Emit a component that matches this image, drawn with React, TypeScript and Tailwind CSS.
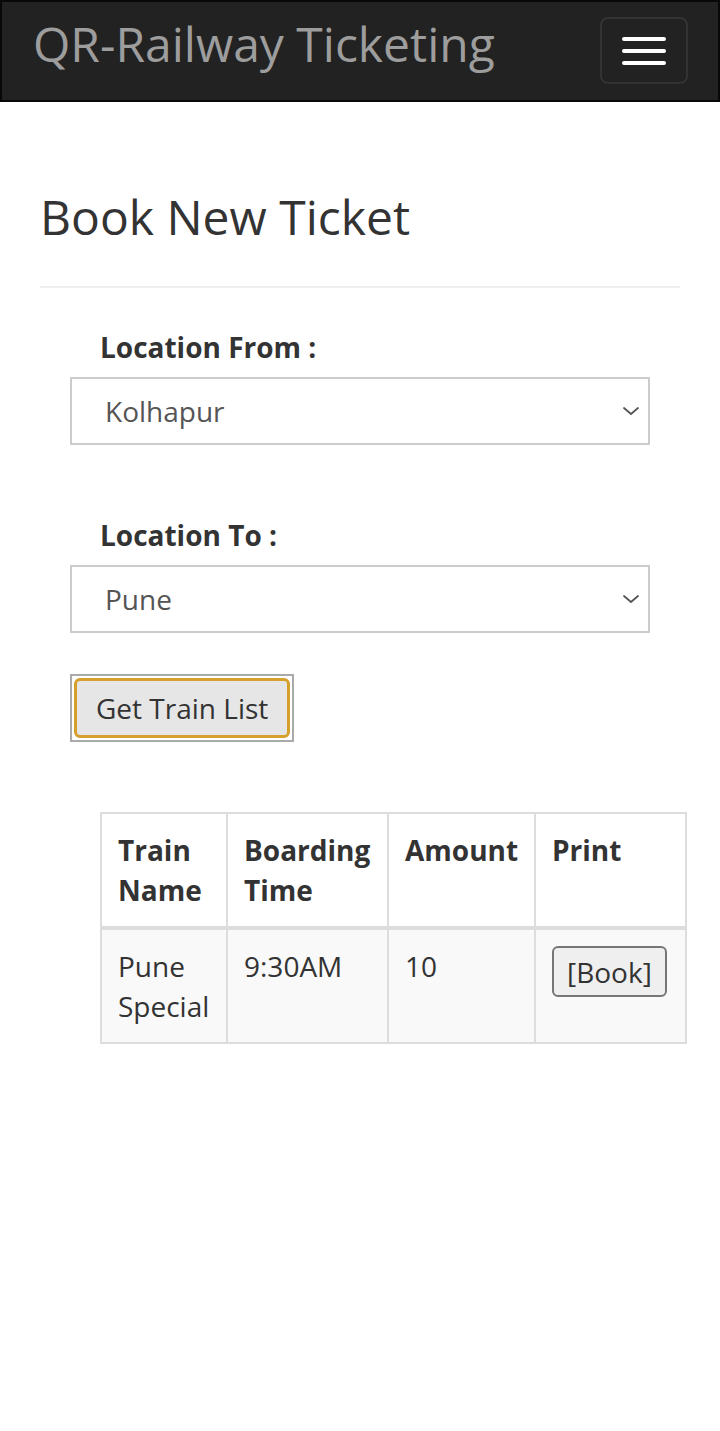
import { useState } from "react";

const trains = [
  { name: "Pune Special", time: "9:30AM", amount: "10" },
];

const Chevron = () => (
  <svg
    className="pointer-events-none absolute right-[10px] top-1/2 -translate-y-1/2"
    width="18"
    height="12"
    viewBox="0 0 18 12"
    fill="none"
  >
    <path d="M2 3l7 6 7-6" stroke="#555" strokeWidth="1.8" strokeLinecap="round" strokeLinejoin="round" />
  </svg>
);

const LocationSelect = ({
  label,
  value,
  onChange,
}: {
  label: string;
  value: string;
  onChange: (v: string) => void;
}) => (
  <div>
    <label className="block pl-[30px] text-[28px] leading-[40px] font-bold text-[#333]">{label}</label>
    <div className="relative mt-[10px] w-[580px]">
      <select
        value={value}
        onChange={(e) => onChange(e.target.value)}
        className="box-border block h-[68px] w-full appearance-none border-2 border-[#ccc] bg-white pl-[33px] text-[28px] text-[#555] outline-none"
      >
        <option>Kolhapur</option>
        <option>Pune</option>
        <option>Mumbai</option>
        <option>Satara</option>
      </select>
      <Chevron />
    </div>
  </div>
);

export default function App() {
  const [from, setFrom] = useState("Kolhapur");
  const [to, setTo] = useState("Pune");

  return (
    <div className="min-h-screen bg-white font-['Open_Sans',sans-serif] text-[#333]">
      {/* Navbar */}
      <header className="flex h-[102px] items-start justify-between border-2 border-[#080808] bg-[#222]">
        <a className="ml-[31px] pt-[18px] text-[48px] leading-[48px] text-[#9d9d9d]">QR-Railway Ticketing</a>
        <button className="mr-[30px] mt-[15px] flex h-[67px] w-[88px] flex-col items-center justify-center gap-[8px] rounded-[8px] border-2 border-[#333]">
          <span className="block h-[4px] w-[44px] rounded-[2px] bg-white" />
          <span className="block h-[4px] w-[44px] rounded-[2px] bg-white" />
          <span className="block h-[4px] w-[44px] rounded-[2px] bg-white" />
        </button>
      </header>

      <main className="px-[40px] pt-[90px]">
        <h2 className="text-[48px] leading-[50px] text-[#333]">Book New Ticket</h2>
        <hr className="mt-[44px] border-t-2 border-[#eee]" />

        <div className="pl-[30px] pt-[39px]">
          <LocationSelect label="Location From :" value={from} onChange={setFrom} />
          <div className="h-[70px]" />
          <LocationSelect label="Location To :" value={to} onChange={setTo} />

          <div className="mt-[41px] inline-block border-2 border-[#aaa] p-[2px]">
            <button className="block h-[60px] rounded-[6px] border-[3px] border-[#d6a02c] bg-[#e6e6e6] px-[19px] text-[28px] leading-[40px] text-[#333]">
              Get Train List
            </button>
          </div>

          <table className="mt-[70px] ml-[30px] w-[585px] table-fixed border-collapse border-2 border-[#ddd] text-[28px] leading-[40px]">
            <colgroup>
              <col className="w-[126px]" />
              <col className="w-[161px]" />
              <col className="w-[147px]" />
              <col className="w-[151px]" />
            </colgroup>
            <thead>
              <tr className="border-b-4 border-[#ddd] bg-white">
                <th className="border-2 border-[#ddd] border-b-4 p-[16px] text-left align-top font-bold">Train Name</th>
                <th className="border-2 border-[#ddd] border-b-4 p-[16px] text-left align-top font-bold">Boarding Time</th>
                <th className="border-2 border-[#ddd] border-b-4 p-[16px] text-left align-top font-bold">Amount</th>
                <th className="border-2 border-[#ddd] border-b-4 p-[16px] text-left align-top font-bold">Print</th>
              </tr>
            </thead>
            <tbody>
              {trains.map((t) => (
                <tr key={t.name} className="bg-[#f9f9f9]">
                  <td className="border-2 border-[#ddd] p-[16px] align-top">{t.name}</td>
                  <td className="border-2 border-[#ddd] p-[16px] align-top">{t.time}</td>
                  <td className="border-2 border-[#ddd] p-[16px] align-top">{t.amount}</td>
                  <td className="border-2 border-[#ddd] p-[16px] align-top">
                    <button className="h-[51px] rounded-[6px] border-2 border-[#767676] bg-[#efefef] px-[13px] text-[28px] leading-[40px] text-[#333]">
                      [Book]
                    </button>
                  </td>
                </tr>
              ))}
            </tbody>
          </table>
        </div>
      </main>
    </div>
  );
}
